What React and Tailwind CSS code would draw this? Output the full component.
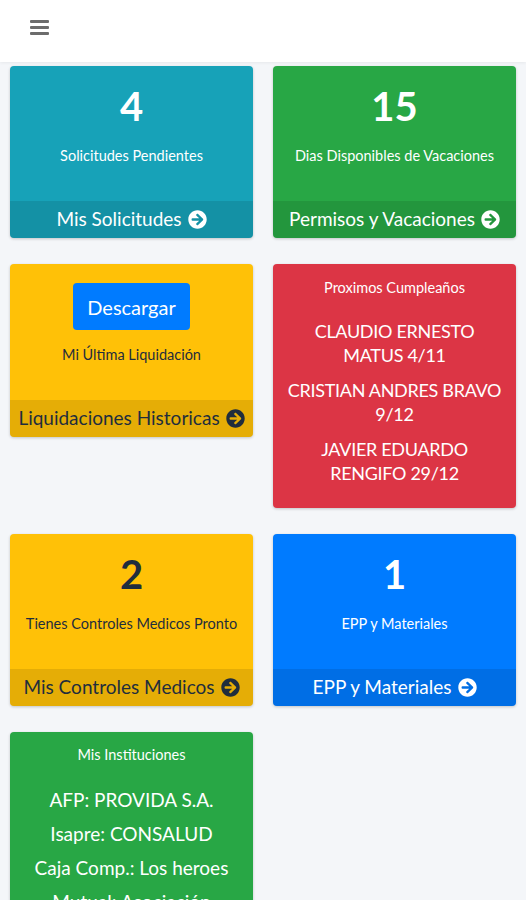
import { FaArrowCircleRight } from "react-icons/fa";

const font = { fontFamily: "Lato, 'Noto Sans', sans-serif" };

function Footer({ label, dark }) {
  return (
    <div
      className={`flex items-center justify-center gap-[6px] h-[37px] bg-black/10 text-[19px] ${
        dark ? "text-[#1f2d3d]" : "text-white"
      }`}
    >
      <span>{label}</span>
      <FaArrowCircleRight className="text-[19px]" />
    </div>
  );
}

function StatCard({ color, number, label, footer, dark }) {
  return (
    <div className={`${color} rounded-[4px] shadow-[0_1px_3px_rgba(0,0,0,0.2)] overflow-hidden`}>
      <div className={`flex flex-col items-center pt-[16px] pb-[35px] ${dark ? "text-[#1f2d3d]" : "text-white"}`}>
        <h3 className="text-[40px] font-bold leading-[48px]">{number}</h3>
        <p className="mt-[16px] text-[14.5px] leading-[20px]">{label}</p>
      </div>
      <Footer label={footer} dark={dark} />
    </div>
  );
}

export default function App() {
  return (
    <div className="min-h-[900px] bg-[#f4f6f9]" style={font}>
      {/* top bar */}
      <header className="h-[62px] bg-white flex items-start pt-[20px] pl-[30px] shadow-[0_1px_3px_rgba(0,0,0,0.06)]">
        <div className="flex flex-col gap-[3px] w-[19px]">
          <span className="h-[3px] bg-[#6c6c6c] rounded-[1px]" />
          <span className="h-[3px] bg-[#6c6c6c] rounded-[1px]" />
          <span className="h-[3px] bg-[#6c6c6c] rounded-[1px]" />
        </div>
      </header>

      <main className="grid grid-cols-2 gap-x-[20px] gap-y-[26px] items-start px-[10px] pt-[4px]">
        <StatCard
          color="bg-[#17a2b8]"
          number="4"
          label="Solicitudes Pendientes"
          footer="Mis Solicitudes"
        />
        <StatCard
          color="bg-[#28a745]"
          number="15"
          label="Dias Disponibles de Vacaciones"
          footer="Permisos y Vacaciones"
        />

        {/* liquidacion */}
        <div className="bg-[#ffc107] rounded-[4px] shadow-[0_1px_3px_rgba(0,0,0,0.2)] overflow-hidden">
          <div className="flex flex-col items-center pt-[19px] pb-[35px] text-[#1f2d3d]">
            <button className="w-[117px] h-[47px] rounded-[4px] bg-[#007bff] text-white text-[20px]">
              Descargar
            </button>
            <p className="mt-[15px] text-[14.5px] leading-[20px]">Mi Última Liquidación</p>
          </div>
          <Footer label="Liquidaciones Historicas" dark />
        </div>

        {/* cumpleaños */}
        <div className="bg-[#dc3545] rounded-[4px] shadow-[0_1px_3px_rgba(0,0,0,0.2)] text-white text-center px-[10px] pt-[14px] pb-[23px]">
          <p className="text-[14.5px] leading-[20px]">Proximos Cumpleaños</p>
          <div className="mt-[21px] flex flex-col gap-[11px] text-[18px] tracking-[-0.3px] leading-[24px]">
            <p>CLAUDIO ERNESTO MATUS 4/11</p>
            <p>CRISTIAN ANDRES BRAVO 9/12</p>
            <p>JAVIER EDUARDO RENGIFO 29/12</p>
          </div>
        </div>

        <StatCard
          color="bg-[#ffc107]"
          number="2"
          label="Tienes Controles Medicos Pronto"
          footer="Mis Controles Medicos"
          dark
        />
        <StatCard
          color="bg-[#007bff]"
          number="1"
          label="EPP y Materiales"
          footer="EPP y Materiales"
        />

        {/* instituciones */}
        <div className="bg-[#28a745] rounded-[4px] shadow-[0_1px_3px_rgba(0,0,0,0.2)] text-white text-center px-[10px] pt-[13px] pb-[23px]">
          <p className="text-[14.5px] leading-[20px]">Mis Instituciones</p>
          <div className="mt-[23px] flex flex-col gap-[10px] text-[19px] leading-[24px]">
            <p>AFP: PROVIDA S.A.</p>
            <p>Isapre: CONSALUD</p>
            <p>Caja Comp.: Los heroes</p>
            <p>Mutual: Asociación Chilena de Seguridad</p>
          </div>
        </div>
      </main>
    </div>
  );
}
